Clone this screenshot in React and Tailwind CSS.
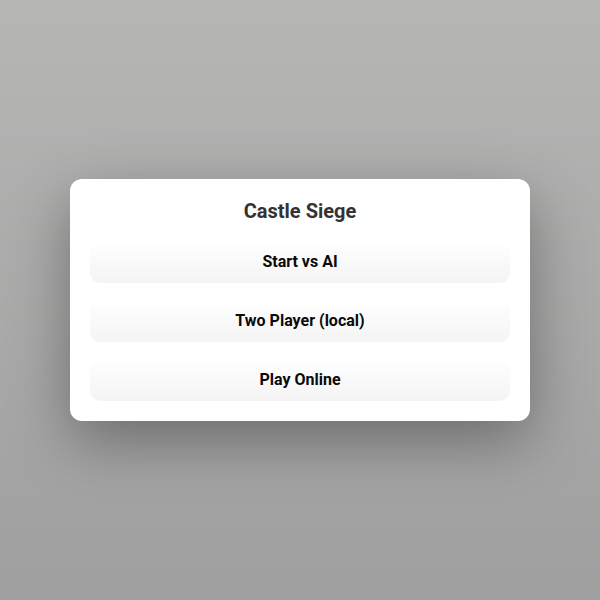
export default function App() {
  const items = ["Start vs AI", "Two Player (local)", "Play Online"];
  return (
    <div
      className="min-h-screen flex items-center justify-center bg-gradient-to-b from-[#b6b6b5] to-[#9f9f9f]"
      style={{ fontFamily: "Roboto, 'Liberation Sans', sans-serif" }}
    >
      <div className="w-[460px] bg-white rounded-[12px] p-5 flex flex-col gap-4 shadow-[0_20px_60px_rgba(0,0,0,0.35)]">
        <h1 className="text-center text-[20px] leading-[25px] font-bold text-[#333333]">
          Castle Siege
        </h1>
        {items.map((label) => (
          <button
            key={label}
            className="h-[43px] w-full rounded-[10px] bg-gradient-to-b from-white to-[#f4f4f4] text-[16px] font-bold text-[#0a0a0a]"
          >
            {label}
          </button>
        ))}
      </div>
    </div>
  );
}
